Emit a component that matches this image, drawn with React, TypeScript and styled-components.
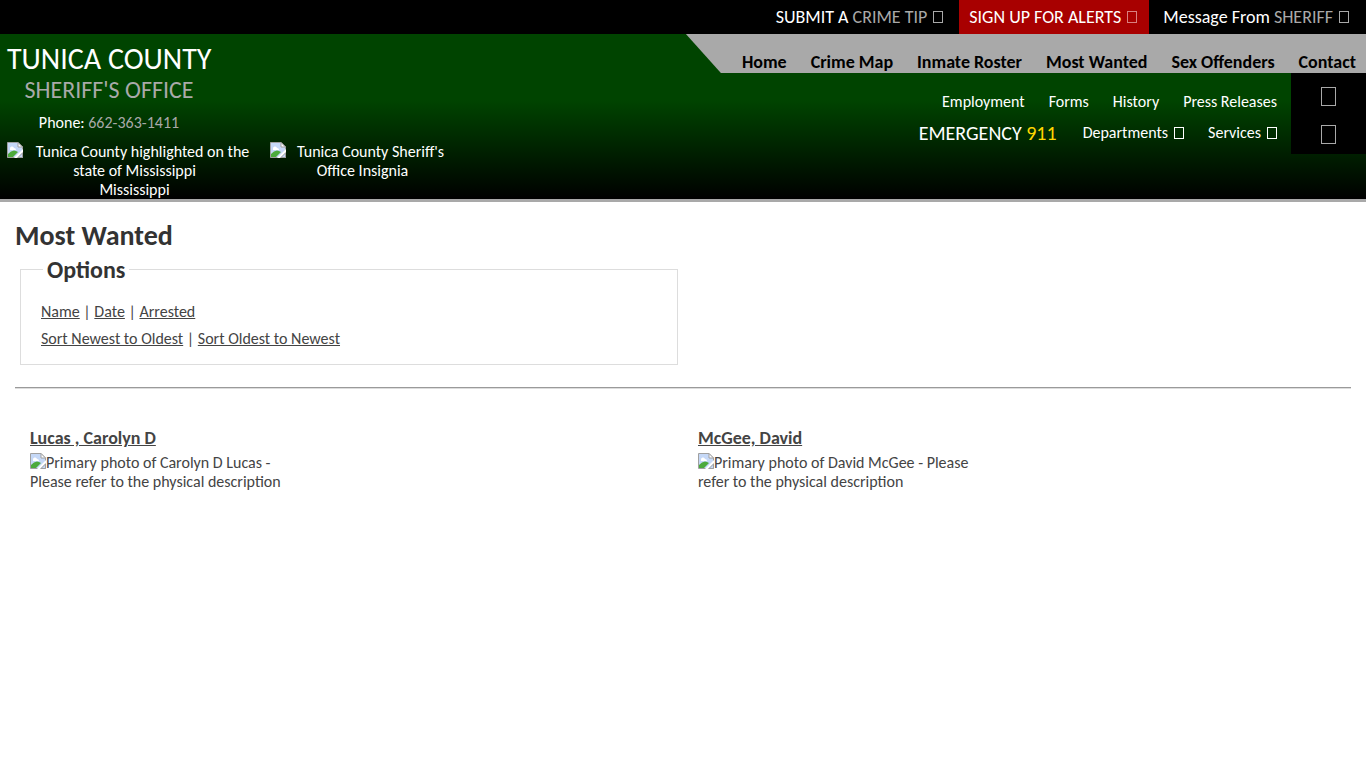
import React from 'react';
import styled, { createGlobalStyle } from 'styled-components';

const GlobalStyle = createGlobalStyle`
  * { box-sizing: border-box; }
  body {
    margin: 0;
    background: #fff;
    color: #444;
    font-family: Calibri, Carlito, Lato, sans-serif;
    font-size: 16px;
    line-height: 19px;
  }
  a { color: inherit; }
`;

const TopBar = styled.div`
  display: flex;
  justify-content: flex-end;
  gap: 4px;
  height: 34px;
  padding-right: 5px;
  background: #000;
`;

const TopLink = styled.a<{ $alert?: boolean }>`
  display: flex;
  align-items: center;
  gap: 6px;
  padding: 0 12px 0 10px;
  background: ${p => (p.$alert ? '#a80000' : 'transparent')};
  color: #fff;
  font-size: 18px;
  text-decoration: none;
  white-space: nowrap;
`;

const Muted = styled.span`
  color: #a9a9a9;
`;

const Glyph = styled.span<{ $color?: string; $large?: boolean }>`
  display: inline-block;
  flex: none;
  width: ${p => (p.$large ? '15px' : '10px')};
  height: ${p => (p.$large ? '19px' : '12px')};
  border: 1px solid ${p => p.$color || '#a9a9a9'};
`;

const Header = styled.header`
  display: flex;
  justify-content: space-between;
  align-items: flex-start;
  min-height: 168px;
  border-bottom: 3px solid #a9a9a9;
  background: linear-gradient(#004400 40%, #000 100%);
  color: #fff;
`;

const Brand = styled.div`
  padding: 7px 0 0 7px;
`;

const Title = styled.div`
  width: 204px;
  text-align: center;
  white-space: nowrap;
`;

const County = styled.div`
  font-size: 30px;
  line-height: 36px;
`;

const Office = styled.div`
  color: #a9a9a9;
  font-size: 24px;
  line-height: 26px;
`;

const Phone = styled.p`
  margin: 10px 0;
  a { color: #a9a9a9; text-decoration: none; }
`;

const Emblems = styled.div`
  display: flex;
  gap: 8px;
  text-align: center;
`;

const Emblem = styled.div<{ $width: number }>`
  width: ${p => p.$width}px;
  svg { float: left; }
`;

const Menus = styled.div`
  display: flex;
  flex-direction: column;
`;

const MainNav = styled.nav`
  display: flex;
  align-items: flex-end;
  gap: 24px;
  height: 39px;
  padding: 0 10px 0 56px;
  background: #a9a9a9;
  clip-path: polygon(0 0, 100% 0, 100% 100%, 35px 100%);
  a {
    color: #000;
    font-size: 18px;
    font-weight: bold;
    line-height: 22px;
    text-decoration: none;
    white-space: nowrap;
  }
`;

const SubMenus = styled.div`
  display: flex;
  justify-content: flex-end;
`;

const SubRows = styled.div`
  padding: 13px 14px 0 0;
`;

const SubRow = styled.nav`
  display: flex;
  align-items: center;
  justify-content: flex-end;
  gap: 24px;
  height: 31px;
  a { color: #fff; text-decoration: none; }
`;

const MenuButton = styled.button`
  display: flex;
  align-items: center;
  gap: 6px;
  padding: 0;
  border: 0;
  background: none;
  color: #fff;
  font: inherit;
`;

const Emergency = styled.span`
  margin-right: 2px;
  font-size: 20px;
  line-height: 24px;
  span { color: #ffd700; }
`;

const Social = styled.div`
  display: flex;
  flex-direction: column;
  align-items: center;
  gap: 19px;
  width: 75px;
  height: 81px;
  padding-top: 14px;
  background: #000;
  a { display: flex; }
`;

const Main = styled.main`
  padding: 18px 15px;
`;

const Heading = styled.h1`
  margin: 0;
  color: #333;
  font-size: 28px;
  line-height: 32px;
`;

const Options = styled.fieldset`
  width: 50%;
  max-width: 658px;
  margin: 2px 5px 22px;
  padding: 14px 20px 12px;
  border: 1px solid #ddd;
  p { margin: 0; line-height: 27px; }
  legend {
    margin-left: 2px;
    padding: 2px 4px 0;
    color: #333;
    font-size: 24px;
    font-weight: bold;
    line-height: 28px;
  }
`;

const Rule = styled.hr`
  margin: 0;
  border: 0;
  border-top: 1px solid #9a9a9a;
  border-bottom: 1px solid #ddd;
`;

const People = styled.div`
  display: grid;
  grid-template-columns: 1fr 1fr;
  padding-top: 38px;
`;

const Person = styled.article`
  padding: 0 15px;
`;

const Name = styled.h2`
  margin: 0 0 4px;
  font-size: 18px;
  line-height: 22px;
`;

const Photo = styled.div`
  width: 276px;
  svg { vertical-align: top; }
`;

const MissingImage = () => (
  <svg width="16" height="16" viewBox="0 0 16 16" aria-hidden="true">
    <path d="M0.5 0.5H11L15.5 5V15.5H0.5Z" fill="#c5d8f7" stroke="#a0a0a0" />
    <path d="M11 0.5V5H15.5Z" fill="#fff" stroke="#a0a0a0" />
    <path d="M3 7a2 2 0 0 1 4-1a2 2 0 0 1 2 2H3Z" fill="#fff" />
    <path d="M1 15V12Q6 6 11 10L6 15Z" fill="#4caa3c" />
    <path d="M7 16L16 7V10L10 16Z" fill="#fff" />
    <path d="M11 15.5L15.5 11V15.5Z" fill="#c5d8f7" stroke="#a0a0a0" />
  </svg>
);

const mainLinks = ['Home', 'Crime Map', 'Inmate Roster', 'Most Wanted', 'Sex Offenders', 'Contact'];
const subLinks = ['Employment', 'Forms', 'History', 'Press Releases'];
const people = [
  { name: 'Lucas , Carolyn D', alt: 'Primary photo of Carolyn D Lucas - Please refer to the physical description' },
  { name: 'McGee, David', alt: 'Primary photo of David McGee - Please refer to the physical description' },
];

export default function App() {
  return (
    <>
      <GlobalStyle />
      <TopBar>
        <TopLink href="#tip"><span>SUBMIT A <Muted>CRIME TIP</Muted></span><Glyph /></TopLink>
        <TopLink href="#alerts" $alert><span>SIGN UP FOR ALERTS</span><Glyph $color="#d98080" /></TopLink>
        <TopLink href="#message"><span>Message From <Muted>SHERIFF</Muted></span><Glyph /></TopLink>
      </TopBar>
      <Header>
        <Brand>
          <Title>
            <County>TUNICA COUNTY</County>
            <Office>SHERIFF'S OFFICE</Office>
            <Phone>Phone: <a href="tel:6623631411">662-363-1411</a></Phone>
          </Title>
          <Emblems>
            <Emblem $width={255}>
              <MissingImage />Tunica County highlighted on the state of Mississippi
              <div>Mississippi</div>
            </Emblem>
            <Emblem $width={185}><MissingImage />Tunica County Sheriff's Office Insignia</Emblem>
          </Emblems>
        </Brand>
        <Menus>
          <MainNav>
            {mainLinks.map(t => <a key={t} href="#main">{t}</a>)}
          </MainNav>
          <SubMenus>
            <SubRows>
              <SubRow>{subLinks.map(t => <a key={t} href="#sub">{t}</a>)}</SubRow>
              <SubRow>
                <Emergency>EMERGENCY <span>911</span></Emergency>
                <MenuButton>Departments <Glyph $color="#fff" /></MenuButton>
                <MenuButton>Services <Glyph $color="#fff" /></MenuButton>
              </SubRow>
            </SubRows>
            <Social>
              <a href="#facebook" aria-label="Facebook"><Glyph $large /></a>
              <a href="#twitter" aria-label="Twitter"><Glyph $large /></a>
            </Social>
          </SubMenus>
        </Menus>
      </Header>
      <Main>
        <Heading>Most Wanted</Heading>
        <Options>
          <legend>Options</legend>
          <p><a href="#name">Name</a> | <a href="#date">Date</a> | <a href="#arrested">Arrested</a></p>
          <p><a href="#newest">Sort Newest to Oldest</a> | <a href="#oldest">Sort Oldest to Newest</a></p>
        </Options>
        <Rule />
        <People>
          {people.map(p => (
            <Person key={p.name}>
              <Name><a href="#person">{p.name}</a></Name>
              <Photo><MissingImage />{p.alt}</Photo>
            </Person>
          ))}
        </People>
      </Main>
    </>
  );
}
